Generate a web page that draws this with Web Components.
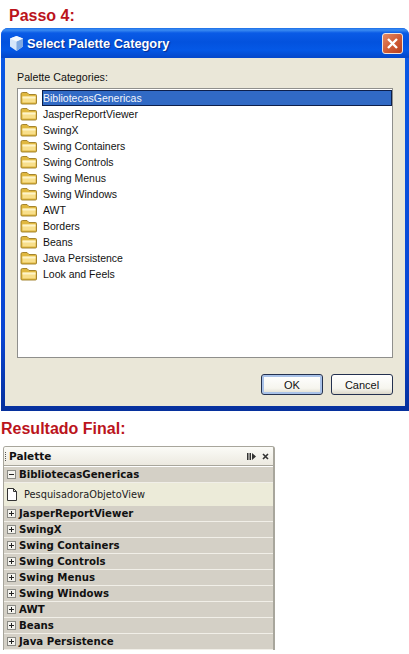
<!DOCTYPE html>
<html>
<head>
<meta charset="utf-8">
<style>
html, body { margin: 0; background: #fff; }
body { font-family: "Liberation Sans", sans-serif; height: 654px; overflow: hidden; }
</style>
</head>
<body>
<step-heading style="padding: 6px 0 0 9px; height: 22px;">Passo 4:</step-heading>
<xp-dialog heading="Select Palette Category">
    <folder-list label="Palette Categories:">
        <folder-row selected>BibliotecasGenericas</folder-row>
        <folder-row>JasperReportViewer</folder-row>
        <folder-row>SwingX</folder-row>
        <folder-row>Swing Containers</folder-row>
        <folder-row>Swing Controls</folder-row>
        <folder-row>Swing Menus</folder-row>
        <folder-row>Swing Windows</folder-row>
        <folder-row>AWT</folder-row>
        <folder-row>Borders</folder-row>
        <folder-row>Beans</folder-row>
        <folder-row>Java Persistence</folder-row>
        <folder-row>Look and Feels</folder-row>
    </folder-list>
    <xp-button slot="buttons" primary>OK</xp-button>
    <xp-button slot="buttons">Cancel</xp-button>
</xp-dialog>
<step-heading style="padding: 8px 0 0 1px; height: 27px;">Resultado Final:</step-heading>
<ide-palette>
    <palette-cat open>BibliotecasGenericas
        <palette-item slot="items">PesquisadoraObjetoView</palette-item>
    </palette-cat>
    <palette-cat>JasperReportViewer</palette-cat>
    <palette-cat>SwingX</palette-cat>
    <palette-cat>Swing Containers</palette-cat>
    <palette-cat>Swing Controls</palette-cat>
    <palette-cat>Swing Menus</palette-cat>
    <palette-cat>Swing Windows</palette-cat>
    <palette-cat>AWT</palette-cat>
    <palette-cat>Beans</palette-cat>
    <palette-cat>Java Persistence</palette-cat>
</ide-palette>

<script>
// small helper, every element just sets its shadow html once
class Base extends HTMLElement {
    constructor() {
        super();
        this.attachShadow({ mode: 'open' });
    }
}

class StepHeading extends Base {
    connectedCallback() {
        this.shadowRoot.innerHTML = `
<style>
:host { display: block; box-sizing: content-box; font: bold 16px/20px "Liberation Sans", sans-serif; color: #bb141c; }
</style>
<slot></slot>`;
    }
}
customElements.define('step-heading', StepHeading);

class XpDialog extends Base {
    connectedCallback() {
        this.shadowRoot.innerHTML = `
<style>
:host { display: block; margin-left: 1px; width: 408px; height: 383px; box-sizing: border-box; border-radius: 7px 7px 0 0; padding: 0 4px 5px; background: linear-gradient(#0a5ae6, #0a45d2 80%, #06309c); }
#title { height: 30px; margin: 0 -4px; padding: 0 5px 0 7px; display: flex; align-items: center; gap: 2px; border-radius: 7px 7px 0 0;
    background: linear-gradient(#1a6ee8 0, #3b8cf2 2px, #0a5be6 5px, #0352de 14px, #0458e6 22px, #0448cc 29px); }
#title span { flex: 1; color: #fff; font: bold 12.8px "Liberation Sans", sans-serif; text-shadow: 1px 1px 1px #0a2c8c; margin-top: 1px; }
#close { width: 21px; height: 21px; box-sizing: border-box; border: 1px solid #f0e4dc; border-radius: 3px; background: linear-gradient(135deg, #e58a66, #cf5a34 55%, #b8401f); display: flex; align-items: center; justify-content: center; margin: 0 1px 0 0; }
#body { height: 348px; background: #eae7d8; box-sizing: border-box; padding: 0 12px 0 12px; display: flex; flex-direction: column; }
#buttons { display: flex; justify-content: flex-end; gap: 8px; margin-top: 16px; }
</style>
<div id="title">
    <svg width="17" height="17" viewBox="0 0 17 17">
        <path d="M8.5 1 L15 3.5 V11.5 L8.5 16 L2 11.5 V3.5 Z" fill="#d6e6fa"/>
        <path d="M8.5 6.5 L15 3.5 V11.5 L8.5 16 Z" fill="#7fa9e2"/>
        <path d="M8.5 1 L15 3.5 L8.5 6.5 L2 3.5 Z" fill="#f4f8fe"/>
    </svg>
    <span>${this.getAttribute('heading')}</span>
    <div id="close">
        <svg width="13" height="13" viewBox="0 0 13 13"><path d="M2 2 L11 11 M11 2 L2 11" stroke="#fff" stroke-width="2.4" fill="none"/></svg>
    </div>
</div>
<div id="body">
    <slot></slot>
    <div id="buttons"><slot name="buttons"></slot></div>
</div>`;
    }
}
customElements.define('xp-dialog', XpDialog);

class FolderList extends Base {
    connectedCallback() {
        this.shadowRoot.innerHTML = `
<style>
:host { display: block; }
label { display: block; font: 10.7px/14px "Liberation Sans", sans-serif; color: #111; padding: 12px 0 4px 0; }
#box { height: 270px; box-sizing: border-box; background: #fff; border: 1px solid #8f8f8c; padding: 1px 0 0 1px; }
</style>
<label>${this.getAttribute('label')}</label>
<div id="box"><slot></slot></div>`;
    }
}
customElements.define('folder-list', FolderList);

class FolderRow extends Base {
    connectedCallback() {
        this.shadowRoot.innerHTML = `
<style>
:host { display: flex; align-items: center; height: 16px; gap: 4px; padding-left: 1px; font: 10.5px/16px "Liberation Sans", sans-serif; color: #111; }
#text { flex: 1; box-sizing: border-box; height: 16px; line-height: 14px; white-space: nowrap; border: 1px solid transparent; }
:host([selected]) #text { background: #316ac5; color: #f2f5fb; border-color: #0d1f4a; }
</style>
<svg width="18" height="14" viewBox="0 0 18 14">
    <path d="M1 3 Q1 1.5 2.5 1.5 H7 L9 3.5 H15.5 Q16.5 3.5 16.5 4.5 V12 Q16.5 13 15.5 13 H2 Q1 13 1 12 Z" fill="#e0b840" stroke="#9c7a22" stroke-width=".9"/>
    <path d="M2.5 5.5 H15.5 V11.5 H2.5 Z" fill="#f8df8c"/>
    <path d="M2.5 5.5 H15.5 V7.5 H2.5 Z" fill="#fff4c8"/>
</svg>
<div id="text"><slot></slot></div>`;
    }
}
customElements.define('folder-row', FolderRow);

class XpButton extends Base {
    connectedCallback() {
        this.shadowRoot.innerHTML = `
<style>
:host { display: flex; align-items: center; justify-content: center; width: 62px; height: 21px; box-sizing: border-box; border: 1px solid #24314f; border-radius: 3px; font: 11px "Liberation Sans", sans-serif; color: #111; background: linear-gradient(#fff, #f6f5ee 70%, #dcd8ca); }
:host([primary]) { box-shadow: inset 0 0 0 2px #a9c2e8; }
</style>
<slot></slot>`;
    }
}
customElements.define('xp-button', XpButton);

class IdePalette extends Base {
    connectedCallback() {
        this.shadowRoot.innerHTML = `
<style>
:host { display: block; margin-left: 3px; width: 272px; height: 204px; box-sizing: border-box; border: 1px solid #a8a69c; border-width: 1px 2px 0 1px; border-radius: 3px 3px 0 0; background: #fff; overflow: hidden; }
#head { height: 18px; display: flex; align-items: center; padding: 0 4px 0 1px; background: linear-gradient(#fbfbf7, #ece9e0); border-bottom: 1px solid #a8a69c; font: bold 10.5px "DejaVu Sans", sans-serif; color: #111; }
#grip { width: 0; height: 9px; border-left: 1px dotted #555; margin-right: 3px; }
#head span { flex: 1; }
#dock { margin-right: 6px; }
#list { padding-top: 1px; }
</style>
<div id="head">
    <div id="grip"></div>
    <span>Palette</span>
    <svg id="dock" width="9" height="9" viewBox="0 0 9 9"><path d="M0 1H1.5V8H0ZM2.5 1H4V8H2.5ZM5 1L9 4.5L5 8Z" fill="#333"/></svg>
    <svg width="7" height="7" viewBox="0 0 7 7"><path d="M1 1L6 6M6 1L1 6" stroke="#333" stroke-width="1.6"/></svg>
</div>
<div id="list"><slot></slot></div>`;
    }
}
customElements.define('ide-palette', IdePalette);

class PaletteCat extends Base {
    connectedCallback() {
        const open = this.hasAttribute('open');
        this.shadowRoot.innerHTML = `
<style>
:host { display: block; }
#row { height: 16px; box-sizing: border-box; display: flex; align-items: center; gap: 3px; padding-left: 3px; background: #d4d0c6; border-bottom: 1px solid #f1efe8; font: bold 10.2px "DejaVu Sans", sans-serif; color: #111; white-space: nowrap; }
#items { background: #ecebd9; }
svg { flex: none; }
</style>
<div id="row">
    <svg width="9" height="9" viewBox="0 0 9 9">
        <rect x=".5" y=".5" width="8" height="8" fill="#f4f3ee" stroke="#8a8a84"/>
        <path d="M2 4.5H7${open ? '' : 'M4.5 2V7'}" stroke="#222"/>
    </svg>
    <slot></slot>
</div>
<div id="items"><slot name="items"></slot></div>`;
    }
}
customElements.define('palette-cat', PaletteCat);

class PaletteItem extends Base {
    connectedCallback() {
        this.shadowRoot.innerHTML = `
<style>
:host { display: flex; align-items: center; height: 23px; gap: 7px; padding-left: 3px; font: 9.8px "DejaVu Sans", sans-serif; color: #222; white-space: nowrap; }
</style>
<svg width="10" height="13" viewBox="0 0 10 13"><path d="M.5 .5H6.5L9.5 3.5V12.5H.5Z M6.5 .5V3.5H9.5" fill="#fff" stroke="#333"/></svg>
<slot></slot>`;
    }
}
customElements.define('palette-item', PaletteItem);
</script>
</body>
</html>
